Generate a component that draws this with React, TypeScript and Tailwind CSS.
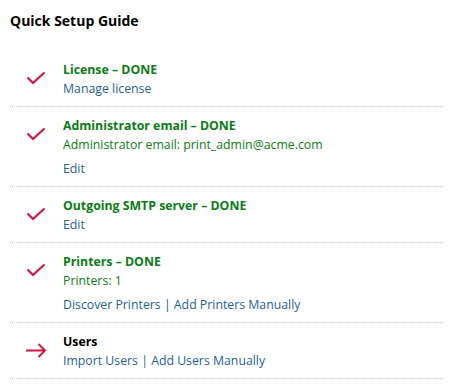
const font = { fontFamily: '"Open Sans", "Liberation Sans", sans-serif' };

function Check() {
  return (
    <svg width="20" height="14" viewBox="0 0 20 14" fill="none">
      <path d="M1.5 6.5 L7 12 L18.5 1.5" stroke="#d3173f" strokeWidth="2.2" />
    </svg>
  );
}

function Arrow() {
  return (
    <svg width="21" height="15" viewBox="0 0 21 15" fill="none">
      <path d="M0 7.5 H19 M12.5 1 L19 7.5 L12.5 14" stroke="#d3173f" strokeWidth="2" />
    </svg>
  );
}

type Step = {
  title: string;
  done: boolean;
  detail?: string;
  links: string[];
};

const steps: Step[] = [
  { title: "License", done: true, links: ["Manage license"] },
  {
    title: "Administrator email",
    done: true,
    detail: "Administrator email: print_admin@acme.com",
    links: ["Edit"],
  },
  { title: "Outgoing SMTP server", done: true, links: ["Edit"] },
  {
    title: "Printers",
    done: true,
    detail: "Printers: 1",
    links: ["Discover Printers", "Add Printers Manually"],
  },
  { title: "Users", done: false, links: ["Import Users", "Add Users Manually"] },
];

export default function App() {
  return (
    <div className="w-[452px] h-[392px] bg-white pl-[10px] pr-[9px] pt-[11px] text-[12.3px] leading-[19px]" style={font}>
      <h1 className="text-[14px] leading-[20px] font-bold text-black">Quick Setup Guide</h1>
      <div className="mt-[20px]">
        {steps.map((s, i) => (
          <div key={i} className="flex border-b border-dotted border-[#c4c4c4] pt-[9px] pb-[8px]">
            <div className="w-[53px] shrink-0 pl-[16px] pt-[11px]">
              {s.done ? <Check /> : <Arrow />}
            </div>
            <div>
              <div className={s.done ? "font-bold text-[#0a7d14]" : "font-bold text-black"}>
                {s.title}
                {s.done && " – DONE"}
              </div>
              {s.detail && <div className="text-[#0a7d14]">{s.detail}</div>}
              <div className={s.detail ? "mt-[5px] text-[#1f5f99]" : "text-[#1f5f99]"}>
                {s.links.map((l, j) => (
                  <span key={j}>
                    {j > 0 && " | "}
                    <a>{l}</a>
                  </span>
                ))}
              </div>
            </div>
          </div>
        ))}
      </div>
    </div>
  );
}
